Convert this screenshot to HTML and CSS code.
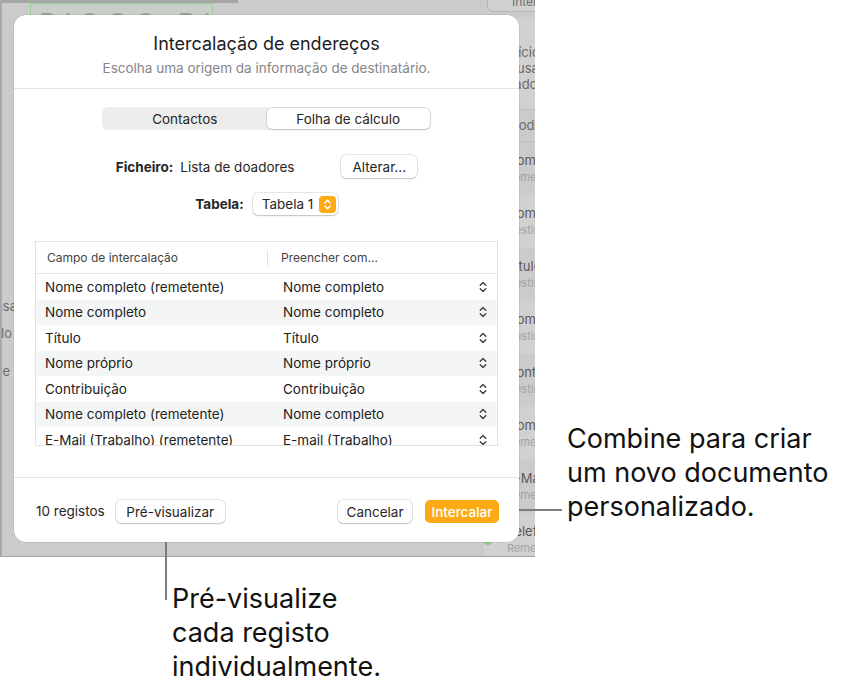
FILE: index.html
```html
<!DOCTYPE html>
<html lang="pt">
<head>
    <meta charset="UTF-8">
    <title>Intercalação de endereços</title>
    <link rel="stylesheet" href="styles.css">
</head>
<body>
    <div class="stage">
        <div class="app">
            <div class="app-topbar"></div>
            <div class="app-canvas-box">BIGGO BIGO</div>
            <div class="app-tool-btn">Intercalar</div>

            <div class="app-left">
                <div class="left-line">usa</div>
                <div class="left-line second">do</div>
                <div class="left-line third">de l</div>
            </div>

            <div class="app-side">
                <div class="side-note">
                    <div>Início</div>
                    <div>Ousa</div>
                    <div>Lado</div>
                </div>
                <div class="side-head">Modelo</div>
                <div class="side-row"><span class="dot"></span><div class="side-title">Nome completo</div><div class="side-sub">Remetente</div></div>
                <div class="side-row alt"><span class="dot"></span><div class="side-title">Nome completo</div><div class="side-sub">Destinatário</div></div>
                <div class="side-row"><span class="dot"></span><div class="side-title">Título</div><div class="side-sub">Destinatário</div></div>
                <div class="side-row alt"><span class="dot"></span><div class="side-title">Nome próprio</div><div class="side-sub">Destinatário</div></div>
                <div class="side-row"><span class="dot"></span><div class="side-title">Contribuição</div><div class="side-sub">Destinatário</div></div>
                <div class="side-row alt"><span class="dot"></span><div class="side-title">Nome completo</div><div class="side-sub">Remetente</div></div>
                <div class="side-row"><span class="dot"></span><div class="side-title">E-Mail</div><div class="side-sub">Remetente</div></div>
                <div class="side-row alt"><span class="dot"></span><div class="side-title">Telefone</div><div class="side-sub">Remetente</div></div>
            </div>

            <div class="sheet">
                <div class="sheet-head">
                    <div class="sheet-title">Intercalação de endereços</div>
                    <div class="sheet-sub">Escolha uma origem da informação de destinatário.</div>
                </div>

                <div class="sheet-body">
                    <div class="segmented">
                        <div class="seg">Contactos</div>
                        <div class="seg active">Folha de cálculo</div>
                    </div>

                    <div class="field-row file-row">
                        <span class="field-label">Ficheiro:</span>
                        <span class="field-value">Lista de doadores</span>
                        <span class="btn btn-change">Alterar...</span>
                    </div>

                    <div class="field-row table-row">
                        <span class="field-label">Tabela:</span>
                        <span class="popup">
                            Tabela 1
                            <span class="popup-stepper">
                                <svg width="9" height="13" viewBox="0 0 9 13"><path d="M1.8 5 4.5 2.3 7.2 5M1.8 8 4.5 10.7 7.2 8" fill="none" stroke="#fff" stroke-width="1.5" stroke-linecap="round" stroke-linejoin="round"/></svg>
                            </span>
                        </span>
                    </div>

                    <div class="merge-table">
                        <div class="merge-head">
                            <span class="head-cell">Campo de intercalação</span>
                            <span class="head-cell split">Preencher com...</span>
                        </div>
                        <div class="merge-row"><span>Nome completo (remetente)</span><span class="fill">Nome completo</span><svg class="updown" width="8" height="12" viewBox="0 0 8 12"><path d="M1.2 4.3 4 1.5 6.8 4.3M1.2 7.7 4 10.5 6.8 7.7" fill="none" stroke="#3a3a3a" stroke-width="1.3" stroke-linecap="round" stroke-linejoin="round"/></svg></div>
                        <div class="merge-row"><span>Nome completo</span><span class="fill">Nome completo</span><svg class="updown" width="8" height="12" viewBox="0 0 8 12"><path d="M1.2 4.3 4 1.5 6.8 4.3M1.2 7.7 4 10.5 6.8 7.7" fill="none" stroke="#3a3a3a" stroke-width="1.3" stroke-linecap="round" stroke-linejoin="round"/></svg></div>
                        <div class="merge-row"><span>Título</span><span class="fill">Título</span><svg class="updown" width="8" height="12" viewBox="0 0 8 12"><path d="M1.2 4.3 4 1.5 6.8 4.3M1.2 7.7 4 10.5 6.8 7.7" fill="none" stroke="#3a3a3a" stroke-width="1.3" stroke-linecap="round" stroke-linejoin="round"/></svg></div>
                        <div class="merge-row"><span>Nome próprio</span><span class="fill">Nome próprio</span><svg class="updown" width="8" height="12" viewBox="0 0 8 12"><path d="M1.2 4.3 4 1.5 6.8 4.3M1.2 7.7 4 10.5 6.8 7.7" fill="none" stroke="#3a3a3a" stroke-width="1.3" stroke-linecap="round" stroke-linejoin="round"/></svg></div>
                        <div class="merge-row"><span>Contribuição</span><span class="fill">Contribuição</span><svg class="updown" width="8" height="12" viewBox="0 0 8 12"><path d="M1.2 4.3 4 1.5 6.8 4.3M1.2 7.7 4 10.5 6.8 7.7" fill="none" stroke="#3a3a3a" stroke-width="1.3" stroke-linecap="round" stroke-linejoin="round"/></svg></div>
                        <div class="merge-row"><span>Nome completo (remetente)</span><span class="fill">Nome completo</span><svg class="updown" width="8" height="12" viewBox="0 0 8 12"><path d="M1.2 4.3 4 1.5 6.8 4.3M1.2 7.7 4 10.5 6.8 7.7" fill="none" stroke="#3a3a3a" stroke-width="1.3" stroke-linecap="round" stroke-linejoin="round"/></svg></div>
                        <div class="merge-row"><span>E-Mail (Trabalho) (remetente)</span><span class="fill">E-mail (Trabalho)</span><svg class="updown" width="8" height="12" viewBox="0 0 8 12"><path d="M1.2 4.3 4 1.5 6.8 4.3M1.2 7.7 4 10.5 6.8 7.7" fill="none" stroke="#3a3a3a" stroke-width="1.3" stroke-linecap="round" stroke-linejoin="round"/></svg></div>
                    </div>
                </div>

                <div class="sheet-foot">
                    <span class="count">10 registos</span>
                    <span class="btn btn-preview">Pré-visualizar</span>
                    <span class="spacer"></span>
                    <span class="btn btn-cancel">Cancelar</span>
                    <span class="btn btn-merge">Intercalar</span>
                </div>
            </div>
        </div>

        <div class="callout-line-h"></div>
        <div class="callout-line-v"></div>
        <div class="callout callout-merge">Combine para criar<br>um novo documento<br>personalizado.</div>
        <div class="callout callout-preview">Pré-visualize<br>cada registo<br>individualmente.</div>
    </div>
</body>
</html>
```

FILE: styles.css
```css
body {
    margin: 0;
    font-family: Inter, "Noto Sans", sans-serif;
    background: #ffffff;
    color: #1d1d1f;
}

.stage {
    position: relative;
    width: 846px;
    height: 694px;
    overflow: hidden;
}

/* app window behind the sheet */

.app {
    position: relative;
    width: 535px;
    height: 557px;
    box-sizing: border-box;
    padding: 15px 0 0 12px;
    background: #cbcbcb;
    border-left: 2px solid #a9a9a9;
    border-bottom: 1px solid #a3a3a3;
    overflow: hidden;
}

.app-topbar {
    position: absolute;
    left: -2px;
    top: 0;
    width: 238px;
    height: 3px;
    background: #a6a6a6;
}

.app-canvas-box {
    position: absolute;
    left: 28px;
    top: 3px;
    width: 183px;
    height: 30px;
    box-sizing: border-box;
    padding-left: 8px;
    border: 1px solid #98cf98;
    background: #c8cec8;
    font-size: 28px;
    line-height: 40px;
    letter-spacing: 7px;
    color: #a0a0a0;
    white-space: nowrap;
    overflow: hidden;
}

.app-tool-btn {
    position: absolute;
    left: 485px;
    top: -8px;
    width: 70px;
    height: 20px;
    box-sizing: border-box;
    padding-left: 24px;
    border: 1px solid #b3b3b3;
    border-radius: 6px;
    background: #d0d0d0;
    font-size: 12px;
    line-height: 18px;
    color: #6e6e6e;
}

.app-left {
    position: absolute;
    left: -60px;
    top: 298px;
    width: 75px;
    text-align: right;
    font-size: 13px;
    line-height: 16px;
    color: #6e6e6e;
}

.left-line.second {
    margin-top: 11px;
    padding-right: 5px;
}

.left-line.third {
    margin-top: 22px;
}

.app-side {
    position: absolute;
    left: 482px;
    top: 17px;
    width: 60px;
    bottom: 0;
    background: #cbcbcb;
}

.side-note {
    height: 93px;
    box-sizing: border-box;
    padding: 27px 0 0 23px;
    background: #d1d1d1;
    border-bottom: 1px solid #bdbdbd;
    font-size: 13px;
    line-height: 16px;
    color: #6a6a6a;
}

.side-head {
    height: 32px;
    box-sizing: border-box;
    padding-left: 23px;
    border-bottom: 1px solid #bdbdbd;
    font-size: 13px;
    line-height: 31px;
    color: #6a6a6a;
}

.side-row {
    position: relative;
    height: 53px;
    box-sizing: border-box;
    padding: 10px 0 0 23px;
    white-space: nowrap;
}

.side-row.alt {
    background: #d1d1d1;
}

.side-row .dot {
    position: absolute;
    left: 0;
    top: 24px;
    width: 8px;
    height: 8px;
    border-radius: 50%;
    background: #8fc78f;
}

.side-title {
    font-size: 13px;
    line-height: 16px;
    color: #5a5a5a;
}

.side-sub {
    margin-top: 2px;
    font-size: 11px;
    line-height: 14px;
    color: #a2a2a2;
}

/* the sheet */

.sheet {
    position: relative;
    z-index: 2;
    width: 505px;
    height: 527px;
    display: flex;
    flex-direction: column;
    background: #ffffff;
    border-radius: 12px;
    box-shadow: 0 0 0 0.5px rgba(0, 0, 0, 0.12);
}

.sheet-head {
    padding: 18px 0 11px;
    border-bottom: 1px solid #e4e4e4;
    text-align: center;
}

.sheet-title {
    font-size: 18px;
    line-height: 22px;
    color: #1d1d1f;
}

.sheet-sub {
    margin-top: 5px;
    font-size: 13.5px;
    line-height: 17px;
    color: #868686;
}

.sheet-body {
    flex: 1;
    display: flex;
    flex-direction: column;
    align-items: center;
    padding: 18px 21px 0;
}

.segmented {
    display: flex;
    width: 329px;
    height: 23px;
    box-sizing: border-box;
    padding: 1px;
    background: #ededed;
    border-radius: 6px;
}

.seg {
    flex: 1;
    display: flex;
    align-items: center;
    justify-content: center;
    font-size: 13.5px;
    color: #262626;
}

.seg.active {
    background: #ffffff;
    border-radius: 5px;
    box-shadow: 0 0 0 0.5px rgba(0, 0, 0, 0.14), 0 1px 2px rgba(0, 0, 0, 0.12);
}

.field-row {
    display: flex;
    align-items: center;
    font-size: 13.5px;
    color: #262626;
}

.file-row {
    margin-top: 25px;
}

.table-row {
    margin-top: 15px;
}

.field-label {
    font-weight: 700;
}

.file-row .field-value {
    width: 161px;
    margin-left: 7px;
}

.btn {
    display: inline-flex;
    align-items: center;
    justify-content: center;
    height: 23px;
    box-sizing: border-box;
    background: #ffffff;
    border-radius: 5px;
    box-shadow: 0 0 0 0.5px rgba(0, 0, 0, 0.2), 0 1px 1.5px rgba(0, 0, 0, 0.14);
    font-size: 13.5px;
    color: #262626;
}

.btn-change {
    width: 76px;
}

.popup {
    display: inline-flex;
    align-items: center;
    justify-content: space-between;
    width: 85px;
    height: 22px;
    box-sizing: border-box;
    margin-left: 9px;
    padding: 0 2px 0 9px;
    background: #ffffff;
    border-radius: 5px;
    box-shadow: 0 0 0 0.5px rgba(0, 0, 0, 0.2), 0 1px 1.5px rgba(0, 0, 0, 0.14);
    font-size: 13.5px;
    color: #262626;
}

.popup-stepper {
    display: flex;
    align-items: center;
    justify-content: center;
    width: 17px;
    height: 17px;
    border-radius: 4px;
    background: #fdaa15;
}

.merge-table {
    width: 463px;
    height: 205px;
    box-sizing: border-box;
    margin-top: 26px;
    border: 1px solid #e2e2e2;
    overflow: hidden;
}

.merge-head {
    display: grid;
    grid-template-columns: 231px 1fr;
    align-items: center;
    height: 32px;
    box-sizing: border-box;
    border-bottom: 1px solid #e6e6e6;
    font-size: 12px;
    color: #444444;
}

.head-cell {
    padding-left: 11px;
    line-height: 16px;
}

.head-cell.split {
    padding-left: 13px;
    border-left: 1px solid #e2e2e2;
}

.merge-row {
    display: grid;
    grid-template-columns: 231px 1fr auto;
    align-items: center;
    height: 25.5px;
    padding: 0 10px 0 9px;
    font-size: 13.5px;
    color: #222222;
    white-space: nowrap;
}

.merge-row:nth-child(odd) {
    background: #f4f5f5;
}

.merge-row .fill {
    padding-left: 7px;
}

.sheet-foot {
    display: flex;
    align-items: flex-start;
    height: 65px;
    box-sizing: border-box;
    padding: 22px 20px 0 22px;
    border-top: 1px solid #e4e4e4;
    font-size: 13.5px;
    color: #262626;
}

.count {
    line-height: 23px;
    margin-right: 11px;
}

.btn-preview {
    width: 109px;
}

.spacer {
    flex: 1;
}

.btn-cancel {
    width: 74px;
}

.btn-merge {
    width: 74px;
    margin-left: 13px;
    background: #fdaa15;
    box-shadow: none;
    color: #ffffff;
    font-weight: 500;
}

/* annotations */

.callout-line-h {
    position: absolute;
    left: 499px;
    top: 509px;
    width: 63px;
    height: 2px;
    background: #7d7d7d;
}

.callout-line-v {
    position: absolute;
    left: 165px;
    top: 523px;
    width: 2px;
    height: 77px;
    background: #7d7d7d;
}

.callout {
    position: absolute;
    font-size: 27px;
    line-height: 34px;
    color: #111111;
    white-space: nowrap;
}

.callout-merge {
    left: 567px;
    top: 422px;
}

.callout-preview {
    left: 172px;
    top: 582px;
}
```
